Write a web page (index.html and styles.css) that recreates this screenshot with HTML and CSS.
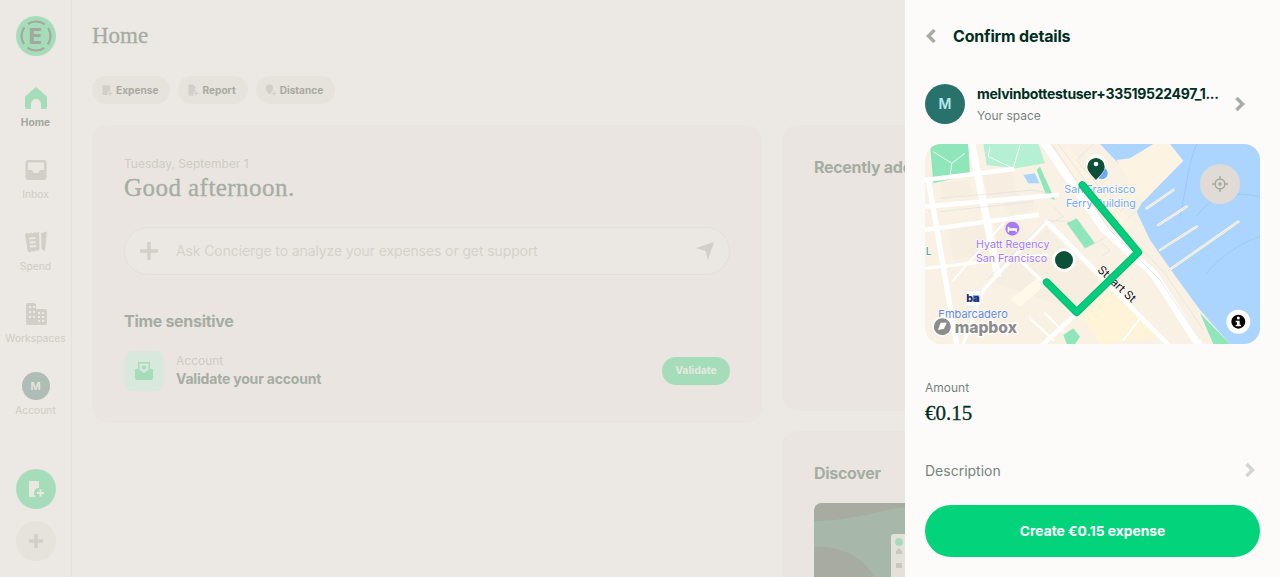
FILE: index.html
```html
<!DOCTYPE html>
<html>

<head>
    <meta name="viewport" content="width=device-width, initial-scale=1">
    <title>Confirm details</title>

    <link rel="stylesheet" href="styles.css">

</head>

<body>
    <div class="app">

        <nav class="sidebar">
            <div class="logo">
                <svg class="logo-ring" width="40" height="40" viewBox="0 0 40 40">
                    <circle cx="20" cy="20" r="14.500" fill="none" stroke="#a5a89d" stroke-width="2.200" stroke-dasharray="18 4.770" stroke-dashoffset="9"/>
                </svg>
                <span class="logo-letter">E</span>
            </div>

            <a class="nav-item active">
                <svg width="24" height="24" viewBox="0 0 24 24"><path fill="#a5ddbb" d="M12 1 L23 10.500 V21 a2 2 0 0 1 -2 2 H17 V18 a5 5 0 0 0 -10 0 V23 H3 a2 2 0 0 1 -2 -2 V10.500 Z"/></svg>
                <span>Home</span>
            </a>
            <a class="nav-item">
                <svg width="24" height="24" viewBox="0 0 24 24"><path fill="#d2cfc8" fill-rule="evenodd" d="M4 2 H20 a2.500 2.500 0 0 1 2.500 2.500 V19.500 a2.500 2.500 0 0 1 -2.500 2.500 H4 a2.500 2.500 0 0 1 -2.500 -2.500 V4.500 A2.500 2.500 0 0 1 4 2 Z M4 4.500 V12 H8 L10 15 H14 L16 12 H20 V4.500 Z"/></svg>
                <span>Inbox</span>
            </a>
            <a class="nav-item">
                <svg width="24" height="24" viewBox="0 0 24 24"><path fill="#d2cfc8" fill-rule="evenodd" d="M1 4 L3 3 L5 4 L7 2.500 L9 3.500 L11 2 L13 3 L15 1.500 L15.500 19 L14 21 L12 20 L10 22 L8 21 L6 22.500 L4 21.500 L3.500 20 Z M5 7.500 L5.200 9.500 L11.500 9 L11.300 7 Z M5.400 11.500 L5.600 13.500 L11.700 13 L11.500 11 Z M5.800 15.500 L6 17.500 L12 17 L11.800 15 Z M17 3 L23 1.500 L21 21 L17.500 19 Z"/></svg>
                <span>Spend</span>
            </a>
            <a class="nav-item">
                <svg width="24" height="24" viewBox="0 0 24 24"><path fill="#d2cfc8" fill-rule="evenodd" d="M2 3 a2 2 0 0 1 2 -2 H10 a2 2 0 0 1 2 2 V7 H21 a2 2 0 0 1 2 2 V21 a2 2 0 0 1 -2 2 H4 a2 2 0 0 1 -2 -2 Z M5 4 V6 H7 V4 Z M9 4 V6 H11 V4 Z M5 9 V11 H7 V9 Z M9 9 V11 H11 V9 Z M14 10 V12 H16 V10 Z M18 10 V12 H20 V10 Z M5 14 V16 H7 V14 Z M9 14 V16 H11 V14 Z M14 14 V16 H16 V14 Z M18 14 V16 H20 V14 Z M14 18 V20 H16 V18 Z M18 18 V20 H20 V18 Z"/></svg>
                <span>Workspaces</span>
            </a>
            <a class="nav-item">
                <div class="nav-avatar">M</div>
                <span>Account</span>
            </a>

            <div class="side-actions">
                <div class="round-btn green">
                    <svg width="20" height="20" viewBox="0 0 20 20"><path fill="#ebe8e2" d="M3 2 H13 V9 a5 5 0 0 0 -3 9 H3 Z"/><path stroke="#ebe8e2" stroke-width="2" d="M11 14 H18 M14.500 10.500 V17.500"/></svg>
                </div>
                <div class="round-btn grey">
                    <svg width="18" height="18" viewBox="0 0 18 18"><path stroke="#d2cfc8" stroke-width="3.500" d="M9 2 V16 M2 9 H16"/></svg>
                </div>
            </div>
        </nav>

        <main class="main">
            <h1 class="page-title">Home</h1>

            <div class="chips">
                <div class="chip">
                    <svg width="12" height="13" viewBox="0 0 16 16"><path fill="#d2cfc8" d="M2 1 H12 V8 a4 4 0 0 0 -3 6 H2 Z"/><path stroke="#d2cfc8" stroke-width="1.500" d="M9 12 H15 M12 9 V15"/></svg>
                    Expense
                </div>
                <div class="chip">
                    <svg width="12" height="13" viewBox="0 0 16 16"><path fill="#d2cfc8" d="M2 0 H8 L11 3 V9 a4 4 0 0 0 -2 6 H2 Z"/><path stroke="#d2cfc8" stroke-width="1.500" d="M9 12 H15 M12 9 V15"/></svg>
                    Report
                </div>
                <div class="chip">
                    <svg width="12" height="13" viewBox="0 0 16 16"><path fill="#d2cfc8" d="M6 0 a5 5 0 0 1 5 5 C11 8 8 11 6 13 C4 11 1 8 1 5 a5 5 0 0 1 5 -5 Z"/><path stroke="#d2cfc8" stroke-width="1.500" d="M9 12 H15 M12 9 V15"/></svg>
                    Distance
                </div>
            </div>

            <div class="columns">
                <section class="card welcome">
                    <div class="date">Tuesday, September 1</div>
                    <h2 class="greeting">Good afternoon.</h2>

                    <div class="ask">
                        <svg width="18" height="18" viewBox="0 0 18 18"><path stroke="#d2cfc8" stroke-width="3.500" d="M9 0 V18 M0 9 H18"/></svg>
                        <span class="ask-text">Ask Concierge to analyze your expenses or get support</span>
                        <svg class="send" width="18" height="18" viewBox="0 0 18 18"><path fill="#d2cfc8" d="M0 6 L18 0 L12 18 L9.500 9 Z"/></svg>
                    </div>

                    <h3 class="card-title">Time sensitive</h3>

                    <div class="task">
                        <div class="task-icon">
                            <svg width="18" height="18" viewBox="0 0 18 18"><path fill="#a5ddbb" d="M3 0 H15 V7 L18 7 V16 a2 2 0 0 1 -2 2 H2 a2 2 0 0 1 -2 -2 V7 L3 7 Z"/><path fill="#d9e8dc" d="M4.500 1.500 H13.500 V8 L9 11 L4.500 8 Z"/><circle cx="9" cy="5.500" r="2" fill="#a5ddbb"/></svg>
                        </div>
                        <div class="task-text">
                            <div class="task-label">Account</div>
                            <div class="task-name">Validate your account</div>
                        </div>
                        <div class="validate">Validate</div>
                    </div>
                </section>

                <div class="side-cards">
                    <section class="card recent">
                        <h3 class="card-title">Recently added</h3>
                    </section>
                    <section class="card discover">
                        <h3 class="card-title">Discover</h3>
                        <div class="discover-pic">
                            <svg width="91" height="74" viewBox="0 0 91 74">
                                <rect width="91" height="74" fill="#a7b8a9"/>
                                <path fill="#a8aba0" d="M0 0 H91 V4 C70 6 40 18 0 18 Z"/>
                                <path fill="#a8aba0" d="M0 44 C30 42 52 58 60 74 H0 Z"/>
                                <rect x="77" y="31" width="20" height="50" rx="3" fill="#e3e1da"/>
                                <circle cx="85" cy="39" r="4" fill="#a5ddbb"/>
                                <path fill="#c9c8c0" d="M85 45 L88 48 V51 H82 V48 Z"/>
                                <rect x="82" y="60" width="6" height="5" fill="#c9c8c0"/>
                            </svg>
                        </div>
                    </section>
                </div>
            </div>
        </main>
    </div>

    <aside class="panel">
        <header class="panel-head">
            <svg width="12" height="16" viewBox="0 0 12 16"><path fill="none" stroke="#a9aca6" stroke-width="3.500" d="M9.500 2 L3.500 8 L9.500 14"/></svg>
            <span class="panel-title">Confirm details</span>
        </header>

        <div class="space-row">
            <div class="space-avatar">M</div>
            <div class="space-text">
                <div class="space-name">melvinbottestuser+33519522497_1...</div>
                <div class="space-sub">Your space</div>
            </div>
            <svg width="12" height="16" viewBox="0 0 12 16"><path fill="none" stroke="#a9aca6" stroke-width="3.500" d="M2.500 2 L8.500 8 L2.500 14"/></svg>
        </div>

        <div class="map">
            <svg width="335" height="200" viewBox="15 12 1005 600">
                <rect x="15" y="12" width="1005" height="600" fill="#f9f1e3"/>

                <!-- water -->
                <path fill="#abd5fe" d="M540 12 L600 75 L665 190 L650 215 L690 300 L760 400 L840 510 L930 612 H1020 V12 Z"/>
                <path fill="#fdf3e2" d="M590 60 L630 55 L700 12 H750 L790 62 L665 190 L640 150 Z"/>
                <path fill="none" stroke="#8fc2f5" stroke-width="2" d="M830 12 C800 80 800 150 780 230 M1020 170 C930 150 870 170 830 230 M1020 290 C960 310 900 350 860 400"/>

                <!-- parks -->
                <path fill="#8fe6ba" d="M30 12 H145 L150 105 L40 130 Z"/>
                <path fill="#b6f0d3" d="M190 12 H355 L375 70 L285 85 L200 75 Z"/>
                <path fill="#8fe6ba" d="M360 80 L405 180 L380 170 L350 90 Z"/>
                <path fill="#8fe6ba" d="M440 250 L470 235 L525 310 L495 325 Z"/>
                <path fill="#8fe6ba" d="M430 585 L460 565 L480 590 L465 612 H440 Z"/>
                <path fill="#8fe6ba" d="M840 520 L930 612 H880 Z"/>
                <path fill="#abd5fe" d="M310 105 L345 100 L358 130 L325 130 Z"/>
                <path fill="none" stroke="#fff" stroke-width="2.500" d="M40 35 L95 70 L135 40 M95 70 L90 110 M210 20 L205 50 L280 85 M300 15 L280 85"/>

                <!-- blocks -->
                <path fill="#f5eee1" d="M60 130 L145 120 L160 160 L70 180 Z M190 105 L275 95 L290 165 L205 170 Z M250 190 L340 175 L345 210 L270 225 Z M80 270 L190 250 L210 340 L100 360 Z M225 250 L300 240 L340 345 L240 370 Z"/>
                <path fill="#f5eee1" d="M380 265 L500 385 L610 490 L470 510 L225 430 L240 400 Z"/>
                <path fill="#fff3d8" d="M540 410 L640 510 L730 590 L540 612 L480 530 Z"/>
                <path fill="#fff9ea" d="M270 480 L350 415 L370 440 L300 500 Z"/>
                <path fill="#fdf3e2" d="M450 20 L530 130 L640 250 L600 280 L480 150 L410 40 Z"/>

                <!-- roads -->
                <g fill="none" stroke="#fff" stroke-linecap="square">
                    <path stroke-width="22" d="M155 12 L232 400"/>
                    <path stroke-width="16" d="M25 120 L110 612"/>
                    <path stroke-width="14" d="M15 120 L275 88"/>
                    <path stroke-width="14" d="M15 200 L410 165"/>
                    <path stroke-width="14" d="M15 270 L350 225"/>
                    <path stroke-width="10" d="M15 385 L380 345"/>
                    <path stroke-width="24" d="M375 12 L550 265 L700 400 L835 612"/>
                    <path stroke-width="14" d="M380 245 L770 640"/>
                    <path stroke-width="10" d="M380 245 L190 450 L130 612"/>
                    <path stroke-width="14" d="M650 345 L470 520 L370 612"/>
                    <path stroke-width="10" d="M300 360 L470 525"/>
                    <path stroke-width="6" d="M250 250 L100 420"/>
                    <path stroke-width="6" d="M330 535 L400 600 M375 520 L430 575 M610 600 L660 535"/>
                </g>
                <g fill="none" stroke="#dfe1e2" stroke-width="2">
                    <path d="M60 175 L340 150 L385 160"/>
                    <path d="M60 215 L340 185"/>
                    <path d="M395 12 L570 270 L720 420 L840 600"/>
                    <path d="M415 12 L590 250 L735 400 L850 570"/>
                    <path d="M455 245 L380 240 L200 420"/>
                    <path d="M560 290 L490 330 M545 310 L570 330 L545 350"/>
                    <path d="M520 12 L470 60 L560 170"/>
                    <path d="M400 200 L430 230 L390 250"/>
                    <path d="M600 215 L640 180 M620 240 L650 210"/>
                </g>

                <!-- piers -->
                <g fill="none" stroke-linecap="round">
                    <path stroke="#fdf3e2" stroke-width="8" d="M680 205 L760 150 M715 255 L800 200 M720 330 L830 260 M745 392 L955 245"/>
                    <path stroke="#dcdcd8" stroke-width="2" d="M680 205 L760 150 M715 255 L800 200 M720 330 L830 260 M745 392 L955 245"/>
                </g>

                <!-- labels -->
                <g class="map-labels">
                    <text class="lbl-teal" x="17" y="345">L</text>
                    <text class="lbl-blue" x="433" y="158">San Francisco</text>
                    <text class="lbl-blue" x="438" y="201">Ferry Building</text>
                    <text class="lbl-purple" x="168" y="323">Hyatt Regency</text>
                    <text class="lbl-purple" x="168" y="367">San Francisco</text>
                    <text class="lbl-indigo" x="55" y="534">Embarcadero</text>
                    <text class="lbl-road" transform="translate(530 392) rotate(43)">Stuart St</text>
                </g>
                <circle cx="277" cy="266" r="21" fill="#a77cf2"/>
                <path fill="#fff" d="M263 260 H268 V265 H291 V277 H287 V272 H267 V277 H263 Z"/>

                <rect x="136" y="452" width="46" height="46" rx="6" fill="#fff" stroke="#ececec" stroke-width="2"/>
                <rect x="158" y="466" width="20" height="20" fill="#6d8fe8"/>
                <text class="lbl-ba" x="139" y="485">ba</text>

                <!-- route -->
                <path fill="none" stroke="#08b872" stroke-width="23" stroke-linecap="round" stroke-linejoin="round" d="M487 135 L655 337 L470 517 L380 427"/>
                <path fill="none" stroke="#03ce7e" stroke-width="17" stroke-linecap="round" stroke-linejoin="round" d="M487 135 L655 337 L470 517 L380 427"/>

                <!-- pins -->
                <circle cx="545" cy="100" r="18" fill="#6fa9ef"/>
                <path fill="#fff" d="M528 42 a30 30 0 0 1 30 31 C558 90 540 110 528 125 C516 110 498 90 498 73 a30 30 0 0 1 30 -31 Z" opacity=".75"/>
                <path fill="#0b5037" d="M528 54 a26 26 0 0 1 26 26 C554 95 538 108 528 120 C518 108 502 95 502 80 a26 26 0 0 1 26 -26 Z"/>
                <circle cx="528" cy="72" r="7" fill="#fff"/>
                <circle cx="432" cy="360" r="35" fill="#fff"/>
                <circle cx="432" cy="360" r="27" fill="#0b5037"/>

                <!-- map controls -->
                <circle cx="900" cy="132" r="60" fill="#e0dcd5"/>
                <g fill="none" stroke="#a5a89d" stroke-width="4">
                    <circle cx="900" cy="132" r="15"/>
                    <path d="M900 108 V120 M900 144 V156 M876 132 H888 M912 132 H924"/>
                </g>
                <circle cx="900" cy="132" r="5" fill="#a5a89d"/>

                <circle cx="955" cy="545" r="36" fill="#fff"/>
                <circle cx="955" cy="545" r="21" fill="#000"/>
                <circle cx="955" cy="534" r="4.500" fill="#fff"/>
                <path fill="#fff" d="M947 542 H959 V554 H963 V559 H947 V554 H951 V547 H947 Z"/>

                <circle cx="67" cy="560" r="28" fill="#8d8d8d" stroke="#fff" stroke-width="5"/>
                <path fill="#fff" d="M54 570 L62 548 L80 548 L72 566 Z"/>
                <text class="lbl-mapbox" x="104" y="578">mapbox</text>
            </svg>
        </div>

        <div class="amount">
            <div class="amount-label">Amount</div>
            <div class="amount-value">€0.15</div>
        </div>

        <div class="desc-row">
            <span>Description</span>
            <svg width="12" height="16" viewBox="0 0 12 16"><path fill="none" stroke="#d3d5d1" stroke-width="3.500" d="M2.500 2 L8.500 8 L2.500 14"/></svg>
        </div>

        <button class="create">Create €0.15 expense</button>
    </aside>
</body>

</html>
```

FILE: styles.css
```css
html, body {
    margin: 0;
    height: 100%;
    overflow: hidden;
}

body {
    background-color: #ece8e3;
    font-family: Inter, "Liberation Sans", sans-serif;
    color: #a5a89d;
}

.app {
    display: flex;
    height: 577px;
}

/* Left rail */
.sidebar {
    flex: 0 0 71px;
    display: flex;
    flex-direction: column;
    align-items: center;
    padding: 16px 0;
    box-sizing: border-box;
    border-right: 1px solid #e5e1da;
}

.logo {
    position: relative;
    width: 40px;
    height: 40px;
    margin-bottom: 30px;
    border-radius: 50%;
    background-color: #a5ddbb;
    display: flex;
    align-items: center;
    justify-content: center;
}

.logo-ring {
    position: absolute;
    top: 0;
    left: 0;
}

.logo-letter {
    font-size: 22px;
    font-weight: 800;
    color: #a5a89d;
}

.nav-item {
    width: 71px;
    height: 72px;
    display: flex;
    flex-direction: column;
    align-items: center;
    gap: 5px;
    font-size: 10.300px;
    line-height: 14px;
    color: #cfccc5;
    white-space: nowrap;
}

.nav-item.active {
    color: #a5a89d;
    font-weight: 700;
}

.nav-avatar {
    width: 28px;
    height: 28px;
    margin-top: -2px;
    margin-bottom: -2px;
    border-radius: 50%;
    background-color: #aebdb5;
    color: #e3e4dd;
    font-size: 11px;
    font-weight: 700;
    line-height: 28px;
    text-align: center;
}

.side-actions {
    margin-top: auto;
    display: flex;
    flex-direction: column;
    gap: 12px;
}

.round-btn {
    width: 40px;
    height: 40px;
    border-radius: 50%;
    display: flex;
    align-items: center;
    justify-content: center;
}

.round-btn.green {
    background-color: #a5ddbb;
}

.round-btn.grey {
    background-color: #e6e2dc;
}

/* Main column */
.main {
    flex: 1;
    min-width: 0;
    padding: 0 20px;
    overflow: hidden;
}

.page-title {
    margin: 0;
    height: 76px;
    line-height: 71px;
    font-family: "Liberation Serif", serif;
    font-size: 23px;
    font-weight: 400;
    color: #a5ada3;
    -webkit-text-stroke: 0.3px #a5ada3;
}

.chips {
    display: flex;
    gap: 8px;
    margin-bottom: 21px;
}

.chip {
    height: 28px;
    padding: 0 12px 0 9px;
    display: flex;
    align-items: center;
    gap: 3px;
    border-radius: 14px;
    background-color: #e6e2dc;
    font-size: 10.150px;
    font-weight: 700;
    color: #a9ab9f;
}

.columns {
    display: grid;
    grid-template-columns: 670px 478px;
    gap: 20px;
}

.card {
    box-sizing: border-box;
    border-radius: 16px;
    background-color: #eae5e0;
    padding: 32px;
}

.welcome {
    height: 298px;
    padding-top: 31px;
}

.date {
    font-size: 12px;
    line-height: 16px;
    color: #cfccc5;
}

.greeting {
    margin: 1px 0 0;
    font-family: "Liberation Serif", serif;
    font-size: 25px;
    line-height: 30px;
    letter-spacing: 0.45px;
    font-weight: 400;
    color: #a5ada3;
    -webkit-text-stroke: 0.3px #a5ada3;
}

.ask {
    height: 48px;
    margin-top: 24px;
    box-sizing: border-box;
    padding: 0 15px;
    display: flex;
    align-items: center;
    gap: 18px;
    border: 1px solid #e4e0d9;
    border-radius: 24px;
    background-color: #ebe8e3;
}

.ask-text {
    flex: 1;
    padding-bottom: 2px;
    font-size: 14px;
    letter-spacing: -0.11px;
    color: #d5d2cb;
}

.card-title {
    margin: 0;
    font-size: 16px;
    line-height: 20px;
    letter-spacing: -0.3px;
    font-weight: 700;
    color: #a5ada3;
}

.welcome .card-title {
    margin-top: 36px;
}

.task {
    margin-top: 20px;
    display: flex;
    align-items: center;
    gap: 12px;
}

.task-icon {
    width: 40px;
    height: 40px;
    border-radius: 8px;
    background-color: #d9e8dc;
    display: flex;
    align-items: center;
    justify-content: center;
}

.task-text {
    flex: 1;
    padding-bottom: 1px;
}

.task-label {
    font-size: 12px;
    line-height: 16px;
    color: #cfccc5;
}

.task-name {
    font-size: 14px;
    line-height: 20px;
    letter-spacing: -0.19px;
    font-weight: 700;
    color: #a5ada3;
}

.validate {
    width: 68px;
    height: 28px;
    border-radius: 14px;
    background-color: #a5ddbb;
    color: #e6e8e0;
    font-size: 10.500px;
    font-weight: 700;
    line-height: 28px;
    text-align: center;
}

.side-cards {
    display: flex;
    flex-direction: column;
    gap: 20px;
}

.recent {
    height: 286px;
}

.discover {
    height: 300px;
}

.discover-pic {
    margin-top: 20px;
    border-radius: 8px 0 0 0;
    overflow: hidden;
    line-height: 0;
}

/* Right panel lies over the dimmed page */
.panel {
    position: absolute;
    top: 0;
    right: 0;
    bottom: 0;
    width: 375px;
    box-sizing: border-box;
    padding: 0 20px;
    display: flex;
    flex-direction: column;
    background-color: #fcfbf9;
    color: #002e22;
}

.panel-head {
    height: 72px;
    display: flex;
    align-items: center;
    gap: 16px;
}

.panel-title {
    font-size: 16px;
    letter-spacing: -0.17px;
    font-weight: 700;
}

.space-row {
    margin-top: 12px;
    height: 40px;
    display: flex;
    align-items: center;
    gap: 12px;
    padding-right: 14px;
}

.space-avatar {
    flex: 0 0 40px;
    height: 40px;
    border-radius: 50%;
    background-color: #27736c;
    color: #b6e8ea;
    font-size: 14px;
    font-weight: 600;
    line-height: 40px;
    text-align: center;
}

.space-text {
    flex: 1;
    min-width: 0;
}

.space-name {
    font-size: 14px;
    line-height: 18px;
    letter-spacing: -0.3px;
    font-weight: 700;
    white-space: nowrap;
}

.space-sub {
    margin-top: 5px;
    font-size: 12px;
    line-height: 16px;
    color: #76847e;
}

.map {
    margin-top: 20px;
    height: 200px;
    border-radius: 16px;
    overflow: hidden;
    line-height: 0;
}

.map-labels text {
    font-family: Inter, "Liberation Sans", sans-serif;
    font-size: 32px;
    paint-order: stroke;
    stroke: #fff;
    stroke-width: 3px;
}

.map-labels .lbl-blue {
    fill: #6fa9ef;
}

.map-labels .lbl-purple {
    fill: #a178f5;
}

.map-labels .lbl-indigo {
    fill: #5e86e8;
    font-size: 33px;
}

.map-labels .lbl-teal {
    fill: #3a9c86;
}

.map-labels .lbl-road {
    fill: #111;
    font-size: 35px;
}

.lbl-ba {
    font-family: Inter, "Liberation Sans", sans-serif;
    font-size: 32px;
    font-weight: 800;
    fill: #1c2a5e;
}

.lbl-mapbox {
    font-family: Inter, "Liberation Sans", sans-serif;
    font-size: 47px;
    font-weight: 800;
    fill: #8d8d8d;
    paint-order: stroke;
    stroke: #fff;
    stroke-width: 8px;
}

.amount {
    margin-top: 36px;
}

.amount-label {
    font-size: 12px;
    line-height: 16px;
    color: #76847e;
}

.amount-value {
    margin-top: 4px;
    font-family: "Liberation Serif", serif;
    font-size: 21px;
    line-height: 26px;
    -webkit-text-stroke: 0.3px #002e22;
}

.desc-row {
    margin-top: 32px;
    height: 24px;
    display: flex;
    align-items: center;
    justify-content: space-between;
    font-size: 14px;
    color: #76847e;
}

.desc-row svg {
    margin-right: 4px;
}

.create {
    margin-top: 23px;
    height: 52px;
    border: none;
    border-radius: 26px;
    background-color: #03d47c;
    color: #fff;
    font-family: Inter, "Liberation Sans", sans-serif;
    font-size: 13.800px;
    font-weight: 700;
    cursor: pointer;
}
```
